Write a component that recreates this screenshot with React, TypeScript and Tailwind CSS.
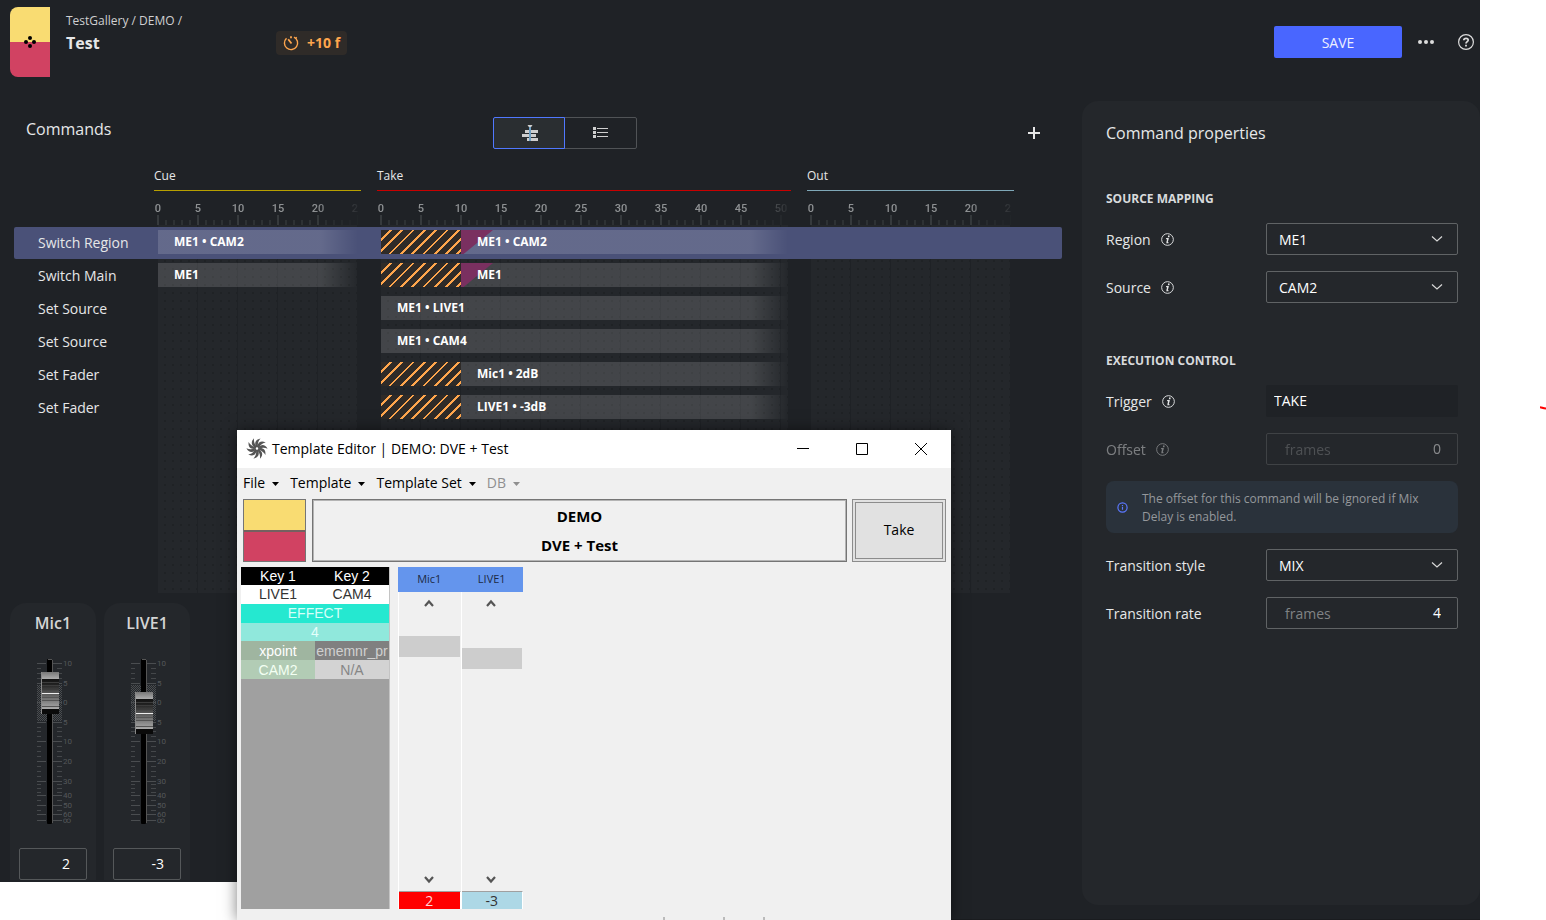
import React, { useState } from "react";

type Clip = { text: string; delay?: boolean; mix?: boolean };
type Command = { name: string; cue?: Clip; take?: Clip };

const COMMANDS: Command[] = [
    { name: "Switch Region", cue: { text: "ME1 • CAM2" }, take: { text: "ME1 • CAM2", delay: true, mix: true } },
    { name: "Switch Main", cue: { text: "ME1" }, take: { text: "ME1", delay: true, mix: true } },
    { name: "Set Source", take: { text: "ME1 • LIVE1" } },
    { name: "Set Source", take: { text: "ME1 • CAM4" } },
    { name: "Set Fader", take: { text: "Mic1 • 2dB", delay: true } },
    { name: "Set Fader", take: { text: "LIVE1 • -3dB", delay: true } },
];

const SECTIONS = [
    { name: "Cue", width: "w-[207px]", line: "border-[#b8a000]", frames: [0, 5, 10, 15, 20, 25] },
    { name: "Take", width: "w-[414px]", line: "border-[#c80000]", frames: [0, 5, 10, 15, 20, 25, 30, 35, 40, 45, 50] },
    { name: "Out", width: "w-[207px]", line: "border-[#7fa8b8]", frames: [0, 5, 10, 15, 20, 25] },
];

const FADERS = [
    { name: "Mic1", value: 2, cap: 14 },
    { name: "LIVE1", value: -3, cap: 34 },
];

// y position of each dB mark on the fader scale
const MARKS: [string, number][] = [
    ["10", 5], ["5", 25], ["0", 44], ["5", 64], ["10", 83], ["20", 103], ["30", 123], ["40", 137], ["50", 147], ["60", 156], ["∞", 162],
];
const MINOR = [10, 15, 20, 69, 73, 78, 88, 93, 98, 108, 113, 118, 126, 130, 134, 142, 152];

const MENUS = [
    { name: "File", disabled: false },
    { name: "Template", disabled: false },
    { name: "Template Set", disabled: false },
    { name: "DB", disabled: true },
];

function Ruler({ frames }: { frames: number[] }) {
    return (
        <div className="-ml-4 mr-[3px] overflow-hidden pt-[11px] [mask-image:linear-gradient(to_right,black_calc(100%-44px),rgba(0,0,0,0.1))]">
            <div className="flex font-['Roboto'] text-[11px] leading-[13px] font-medium text-[#8f9294]">
                {frames.map(f => (
                    <span key={f} className="w-10 shrink-0 text-center">{f}</span>
                ))}
            </div>
            <div className="ml-[19px] h-[10px] bg-[linear-gradient(to_right,#363a3d_2px,transparent_2px),linear-gradient(to_right,#2d3134_2px,transparent_2px)] bg-[size:40px_10px,8px_5px] bg-repeat-x bg-[position:0_0,0_5px]" />
        </div>
    );
}

function Bar({ clip }: { clip?: Clip }) {
    if (!clip) return null;
    return (
        <div className="flex h-6">
            {clip.delay && (
                <div className="w-20 bg-[#2f2b28] bg-[repeating-linear-gradient(135deg,transparent_0_6px,#ffa64d_6px_8px)]" />
            )}
            <div className="relative flex-1 bg-[linear-gradient(to_right,rgba(255,255,255,0.14)_calc(100%-37px),transparent)] pl-4">
                {clip.mix && <div className="absolute top-0 left-0 h-6 w-8 bg-[#7a3060] [clip-path:polygon(0_0,100%_0,8%_100%,0_100%)]" />}
                <span className="relative block text-xs leading-6 font-bold text-white">{clip.text}</span>
            </div>
        </div>
    );
}

function Timeline() {
    return (
        <div>
            <div className="mt-4 flex gap-4 pl-[154px]">
                {SECTIONS.map(s => (
                    <div key={s.name} className={`${s.width} shrink-0`}>
                        <h3 className={`${s.line} border-b pt-px pb-1 text-xs leading-5`}>{s.name}</h3>
                        <Ruler frames={s.frames} />
                    </div>
                ))}
            </div>
            {/* Lanes and command rows share one grid cell */}
            <div className="grid">
                <div className="col-start-1 row-start-1 flex h-[368px] gap-4 pl-[154px]">
                    {SECTIONS.map(s => (
                        <div key={s.name} className={`${s.width} shrink-0 pr-[3px] pl-1`}>
                            <div className="h-full bg-[#24272b] bg-[linear-gradient(to_left,#1f2226_1px,transparent_1px),radial-gradient(circle_at_7px_4px,#1f2225_1px,transparent_1.5px)] bg-[size:40px_8px,8px_8px]" />
                        </div>
                    ))}
                </div>
                <ul className="col-start-1 row-start-1 flex flex-col gap-px pt-[2px] pr-5 pl-[14px]">
                    {COMMANDS.map((c, i) => (
                        <li key={i} className={`flex h-8 rounded-xs ${i === 0 ? "bg-[#4a5178]" : ""}`}>
                            <span className="w-[140px] shrink-0 pl-6 text-sm leading-8">{c.name}</span>
                            <div className="flex gap-4 pt-[3px]">
                                <div className="w-[207px] shrink-0 pr-[3px] pl-1"><Bar clip={c.cue} /></div>
                                <div className="w-[414px] shrink-0 pr-[3px] pl-1"><Bar clip={c.take} /></div>
                            </div>
                        </li>
                    ))}
                </ul>
            </div>
        </div>
    );
}

function Fader({ name, value, cap }: { name: string; value: number; cap: number }) {
    const id = `fader-${name}`;
    return (
        <div className="flex w-[86px] flex-col items-center rounded-t-2xl bg-[#24272b] pt-2">
            <label htmlFor={id} className="text-base leading-6 font-semibold text-[#d4d4d4]">{name}</label>
            <div className="relative mt-[23px] h-[168px] w-[86px]">
                <svg viewBox="0 0 86 168" className="h-full w-full">
                    <defs>
                        <pattern id={`${id}-mesh`} width="2" height="2" patternUnits="userSpaceOnUse">
                            <rect width="1" height="1" fill="#4a4d50" />
                            <rect x="1" y="1" width="1" height="1" fill="#4a4d50" />
                        </pattern>
                        <linearGradient id={`${id}-cap`} x2="0" y2="1">
                            <stop offset="0" stopColor="#777" />
                            <stop offset=".16" stopColor="#aaa" />
                            <stop offset=".17" stopColor="#111" />
                            <stop offset=".3" stopColor="#222" />
                            <stop offset=".5" stopColor="#555" />
                            <stop offset=".88" stopColor="#aaa" />
                            <stop offset=".89" stopColor="#0a0a0a" />
                            <stop offset="1" stopColor="#0a0a0a" />
                        </linearGradient>
                    </defs>
                    <rect x="27" y="27" width="25" height="36" fill={`url(#${id}-mesh)`} />
                    {MARKS.map(([t, y], i) => (
                        <g key={i}>
                            <path d={`M27 ${y}.5h9M43 ${y}.5h9`} stroke="#4a4d50" />
                            <text x="53" y={y + 3} fontSize="8" fontFamily="Roboto" fill="#54575a">{t}</text>
                        </g>
                    ))}
                    {MINOR.map(y => (
                        <path key={y} d={`M27 ${y}.5h4M47 ${y}.5h5`} stroke="#44474a" />
                    ))}
                    <rect x="37" y="1" width="5" height="165" rx="1" fill="#000" />
                    <path d="M38 1.500h4M42.500 2v163" stroke="#555" />
                    <rect x="31" y={cap} width="18" height="42" fill={`url(#${id}-cap)`} />
                    <path d={`M31 ${cap + 10}.5h18M31 ${cap + 13}.5h18M31 ${cap + 17}.5h18`} stroke="#3c3c3c" />
                    <path d={`M31 ${cap + 25}.5h18M31 ${cap + 28}.5h18M31 ${cap + 34}.5h18`} stroke="#555" />
                    <path d={`M31 ${cap + 21}.5h18`} stroke="#eee" />
                    <path d={`M31.500 ${cap}v42`} stroke="#888" />
                </svg>
                <input id={id} type="range" min={-60} max={10} defaultValue={value} className="absolute inset-0 h-full w-full opacity-0 [writing-mode:vertical-lr]" />
            </div>
            <input aria-label={`${name} level`} defaultValue={value} className="mt-[22px] h-8 w-[68px] rounded-xs border border-[#55585a] bg-transparent pr-4 pb-[2px] text-right text-sm text-white outline-none" />
        </div>
    );
}

function InfoIcon() {
    return (
        <svg viewBox="0 0 14 14" className="h-[13px] w-[13px]" fill="none" stroke="currentColor">
            <circle cx="7" cy="7" r="6.300" />
            <path d="M5.500 6h1.800M7.800 5.400L6.300 10.600M5.700 10.400h2.300" strokeWidth="1.500" />
            <path d="M7.500 3.600h1.700" strokeWidth="1.900" />
        </svg>
    );
}

function Field({ label, id, info, dim, children }: { label: string; id: string; info?: boolean; dim?: boolean; children: React.ReactNode }) {
    return (
        <div className={`flex h-8 items-center justify-between ${dim ? "opacity-45" : ""}`}>
            <div className="flex items-center gap-[10px]">
                <label htmlFor={id} className="pt-[2px] text-sm">{label}</label>
                {info && <InfoIcon />}
            </div>
            <div className="w-48">{children}</div>
        </div>
    );
}

function Select({ id, value }: { id: string; value: string }) {
    return (
        <div className="relative">
            <select id={id} className="block h-8 w-full appearance-none rounded-xs border border-[#606365] bg-transparent px-3 pt-[2px] text-sm text-white outline-none">
                <option>{value}</option>
            </select>
            <svg viewBox="0 0 12 8" className="pointer-events-none absolute top-3 right-[15px] h-2 w-3" fill="none" stroke="#d8d8d8" strokeWidth="1.200">
                <path d="M1 1.500l5 4.500 5-4.500" />
            </svg>
        </div>
    );
}

function FramesInput({ id, value, disabled }: { id: string; value: string; disabled?: boolean }) {
    return (
        <div className="flex h-8 items-center rounded-xs border border-[#606365] pr-4 pl-[18px] text-sm">
            <span className="pt-[2px] text-[#808385]">frames</span>
            <input id={id} defaultValue={value} disabled={disabled} className="min-w-0 flex-1 bg-transparent text-right text-white outline-none" />
        </div>
    );
}

function Properties() {
    return (
        <aside className="mb-[14px] w-[398px] shrink-0 rounded-2xl bg-[#24272b] pt-5 pr-[22px] pl-6">
            <h2 className="text-base leading-6">Command properties</h2>
            <h3 className="mt-11 text-xs leading-5 font-bold text-[#d8dadc]">SOURCE MAPPING</h3>
            <div className="mt-[14px] flex flex-col gap-4">
                <Field label="Region" id="region" info><Select id="region" value="ME1" /></Field>
                <Field label="Source" id="source" info><Select id="source" value="CAM2" /></Field>
            </div>
            <h3 className="mt-12 text-xs leading-5 font-bold text-[#d8dadc]">EXECUTION CONTROL</h3>
            <div className="mt-[14px] flex flex-col gap-4">
                <Field label="Trigger" id="trigger" info>
                    <input id="trigger" readOnly value="TAKE" className="block h-8 w-full rounded-xs bg-[#1f2226] px-2 pb-[2px] text-sm text-white outline-none" />
                </Field>
                <Field label="Offset" id="offset" info dim><FramesInput id="offset" value="0" disabled /></Field>
                <div className="flex h-[52px] items-center gap-[14px] rounded-lg bg-[#2a323b] pl-[11px]">
                    <svg viewBox="0 0 12 12" className="h-[11px] w-[11px] shrink-0" fill="none" stroke="#5b78ff" strokeWidth="1.300">
                        <circle cx="6" cy="6" r="5" />
                        <path d="M6 5.300v3.200M6 3.200v1.200" />
                    </svg>
                    <p className="w-[290px] pt-[2px] text-xs leading-[18px] text-[#95989b]">The offset for this command will be ignored if Mix Delay is enabled.</p>
                </div>
                <Field label="Transition style" id="style"><Select id="style" value="MIX" /></Field>
                <Field label="Transition rate" id="rate"><FramesInput id="rate" value="4" /></Field>
            </div>
        </aside>
    );
}

function LevelColumn({ gap, value, tone }: { gap: string; value: string; tone: string }) {
    return (
        <div className="flex flex-1 flex-col border-l border-white">
            <button aria-label="Up" className="flex h-6 items-center justify-center pr-[2px] pb-[2px]">
                <svg viewBox="0 0 10 8" className="h-2 w-[10px]" fill="none" stroke="#555" strokeWidth="2.200"><path d="M1 7l4-4.500L9 7" /></svg>
            </button>
            <div className={`${gap} mr-px h-[21px] bg-[#cdcdcd]`} />
            <button aria-label="Down" className="mt-auto flex h-[22px] items-center justify-center pr-[2px]">
                <svg viewBox="0 0 10 8" className="h-2 w-[10px]" fill="none" stroke="#555" strokeWidth="2.200"><path d="M1 1l4 4.500L9 1" /></svg>
            </button>
            <div className={`${tone} h-[18px] border-t border-r border-t-[#a0a0a0] border-r-white text-center text-sm leading-[17px]`}>{value}</div>
        </div>
    );
}

function TemplateEditor() {
    return (
        <div role="dialog" aria-label="Template Editor" className="absolute top-[430px] bottom-0 left-[237px] flex w-[714px] flex-col bg-[#f0f0f0] text-black shadow-[0_0_14px_rgba(0,0,0,0.5)]">
            <div className="flex h-[38px] items-center bg-white pl-[9px]">
                <svg viewBox="-10 -10 20 20" className="h-[22px] w-[22px] pb-px" fill="#555">
                    {[0, 36, 72, 108, 144, 180, 216, 252, 288, 324].map(a => (
                        <path key={a} transform={`rotate(${a})`} d="M-1.200 -2.200C-2.600 -6 -1 -8.700 3.400 -9.500C1.600 -7.500 .6 -5.500 .8 -2.200Z" />
                    ))}
                    <circle r="2" fill="none" stroke="#555" strokeWidth="1.600" />
                </svg>
                <span className="ml-1 pb-px text-sm">Template Editor | DEMO: DVE + Test</span>
                <div className="ml-auto flex pr-px">
                    <button aria-label="Minimize" className="flex h-[38px] w-[59px] items-center justify-center">
                        <svg viewBox="0 0 12 12" className="h-3 w-3" stroke="#000" fill="none"><path d="M0 5.500h12" /></svg>
                    </button>
                    <button aria-label="Maximize" className="flex h-[38px] w-[59px] items-center justify-center">
                        <svg viewBox="0 0 12 12" className="h-3 w-3" stroke="#000" fill="none"><path d="M.5.5h11v11H.5z" /></svg>
                    </button>
                    <button aria-label="Close" className="flex h-[38px] w-[59px] items-center justify-center">
                        <svg viewBox="0 0 12 12" className="h-3 w-3" stroke="#000" fill="none"><path d="M0 0l12 12M12 0L0 12" /></svg>
                    </button>
                </div>
            </div>
            <div className="flex h-[31px] items-center gap-[11px] pb-[2px] pl-[6px] text-sm">
                {MENUS.map(m => (
                    <button key={m.name} disabled={m.disabled} className="flex items-center gap-[7px] disabled:text-[#8f8f8f]">
                        {m.name}
                        <svg viewBox="0 0 7 4" className="mt-[3px] h-1 w-[7px]" fill="currentColor"><path d="M0 0h7L3.500 4z" /></svg>
                    </button>
                ))}
            </div>
            <div className="flex h-[63px] gap-[5px] pr-[5px] pl-[6px]">
                <div className="w-[63px] shrink-0 border border-[#757575] bg-[linear-gradient(#f9dc72_30px,#756060_30px_32px,#d14262_32px)]" />
                <div className="ml-px flex flex-1 flex-col items-center justify-center gap-1 border border-[#757575] text-[15px] leading-[25px] font-bold inset-ring inset-ring-[#b4b4b4]">
                    <span>DEMO</span>
                    <span>DVE + Test</span>
                </div>
                <button className="w-[94px] border-4 border-double border-[#8c8c8c] bg-[#e1e1e1] pb-px text-sm">Take</button>
            </div>
            <div className="mt-[5px] flex min-h-0 flex-1 gap-2 pl-1">
                <div className="w-[149px] overflow-hidden border-r border-[#c4c4c4] bg-[#a0a0a0] font-['Liberation_Sans'] text-sm">
                    <table className="h-28 w-full table-fixed border-collapse text-center leading-[18px]">
                        <thead>
                            <tr className="bg-black text-white">
                                <th className="font-normal">Key 1</th>
                                <th className="font-normal">Key 2</th>
                            </tr>
                        </thead>
                        <tbody>
                            <tr className="bg-white text-[#333]"><td>LIVE1</td><td>CAM4</td></tr>
                            <tr className="bg-[#25e8d0] text-[#d6fff9]"><td colSpan={2}>EFFECT</td></tr>
                            <tr className="bg-[#90e8dc] text-[#e4fffb]"><td colSpan={2}>4</td></tr>
                            <tr>
                                <td className="bg-[#9fb5a0] text-white">xpoint</td>
                                <td className="overflow-hidden bg-[#808080] whitespace-nowrap text-[#d0d0d0]">ememnr_pr</td>
                            </tr>
                            <tr>
                                <td className="bg-[#b2ccb5] text-[#f2fff2]">CAM2</td>
                                <td className="bg-[#d3d3d3] text-[#868686]">N/A</td>
                            </tr>
                        </tbody>
                    </table>
                </div>
                <div className="flex w-[125px] flex-col">
                    <div className="flex h-[25px] shrink-0 items-center bg-[#6495ed] text-center text-[11px] text-[#1c2a44]">
                        <span className="flex-1">Mic1</span>
                        <span className="flex-1">LIVE1</span>
                    </div>
                    <div className="flex flex-1">
                        <LevelColumn gap="mt-5" value="2" tone="bg-[#ff0000] text-[#ffd8d8]" />
                        <LevelColumn gap="mt-8" value="-3" tone="bg-[#add8e6] text-[#333]" />
                    </div>
                </div>
            </div>
            <div className="flex h-[11px] shrink-0 items-end pl-[426px]">
                <div className="h-[3px] w-[60px] border-l-2 border-[#bbb]" />
                <div className="h-[3px] w-10 border-l-2 border-[#bbb]" />
                <div className="h-[3px] border-l-2 border-[#bbb]" />
            </div>
        </div>
    );
}

export default function App() {
    const [view, setView] = useState<"timeline" | "list">("timeline");

    return (
        <div className="relative min-h-screen overflow-hidden bg-white pr-[66px] font-['Open_Sans',sans-serif] text-[#e6e7e8]">
            <div className="flex min-h-screen flex-col border-b border-[#1a1c1f] bg-[#1f2226]">
                <header className="flex items-center pt-[7px] pr-[6px] pb-6 pl-[10px]">
                    <div className="flex h-[70px] w-10 items-center justify-center rounded-l-lg bg-[linear-gradient(#f9dc72_50%,#d14262_50%)]">
                        <svg viewBox="0 0 12 12" className="h-3 w-3" fill="#000">
                            <circle cx="6" cy="2" r="2" />
                            <circle cx="6" cy="10" r="2" />
                            <circle cx="2" cy="6" r="2" />
                            <circle cx="10" cy="6" r="2" />
                        </svg>
                    </div>
                    <div className="ml-4 w-[210px] self-start pt-[5px]">
                        <nav className="text-xs leading-[18px] text-[#cfd0d1]">
                            <a href="#gallery">TestGallery</a> / <a href="#demo">DEMO</a> /
                        </nav>
                        <h1 className="mt-px text-base leading-6 font-bold">Test</h1>
                    </div>
                    <div className="mt-[2px] flex h-6 items-center gap-2 rounded-sm bg-[#2f2b28] px-[7px] text-sm font-bold text-[#ffa64d]">
                        <svg viewBox="0 0 16 16" className="h-4 w-4" fill="none" stroke="currentColor" strokeWidth="1.400">
                            <path d="M3.500 3.200A6.600 6.600 0 1 0 11 2.100" />
                            <path d="M8 1.300v2M5.200 4.200L8.500 8.500" strokeWidth="1.800" />
                            <path d="M12.500 3.500l1.200-1.200" />
                        </svg>
                        +10 f
                    </div>
                    <button className="ml-auto h-8 w-32 rounded-xs bg-[#4966ff] pt-[2px] text-sm text-[#eef0ff]">SAVE</button>
                    <button aria-label="More" className="ml-4">
                        <svg viewBox="0 0 16 16" className="h-4 w-4" fill="#dcdcdc">
                            <circle cx="2" cy="8" r="2" />
                            <circle cx="8" cy="8" r="2" />
                            <circle cx="14" cy="8" r="2" />
                        </svg>
                    </button>
                    <button aria-label="Help" className="ml-6">
                        <svg viewBox="0 0 16 16" className="h-4 w-4" fill="none" stroke="#dcdcdc">
                            <circle cx="8" cy="8" r="7.400" strokeWidth="1.200" />
                            <path d="M5.800 6.200C5.900 3.600 10.200 3.700 10.200 6.100C10.200 7.700 8 7.700 8 9.600" strokeWidth="1.700" />
                            <path d="M8 10.800v1.700" strokeWidth="1.800" />
                        </svg>
                    </button>
                </header>

                <div className="flex flex-1">
                    <main className="min-w-0 flex-1">
                        <div className="flex items-start justify-between pt-4 pr-8 pl-[26px]">
                            <h2 className="text-base leading-6">Commands</h2>
                            <div className="flex">
                                <button aria-label="Timeline view" onClick={() => setView("timeline")}
                                    className={`relative flex h-8 w-[72px] items-center justify-center rounded-l-xs border pl-[2px] ${view === "timeline" ? "z-10 border-[#5078ff] bg-[#2a2e31]" : "border-[#505356]"}`}>
                                    <svg viewBox="0 0 18 18" className="h-[18px] w-[18px]" fill="#cfcfcf">
                                        <path d="M6.500 1h5L9.500 4h-1z" />
                                        <path d="M4 6h13v3H4zM1 10h14v3H1zM6 14h11v3H6z" />
                                        <path d="M8 3h2v14H8z" fill="#6fa0c4" />
                                    </svg>
                                </button>
                                <button aria-label="List view" onClick={() => setView("list")}
                                    className={`-ml-px flex h-8 w-[73px] items-center justify-center rounded-r-xs border pl-[2px] ${view === "list" ? "border-[#5078ff] bg-[#2a2e31]" : "border-[#505356]"}`}>
                                    <svg viewBox="0 0 16 12" className="h-3 w-4" fill="#cfcfcf">
                                        <path d="M0 0h3v3H0zM0 4h3v3H0zM0 8h3v3H0zM4 1h11v1H4zM4 5h11v1H4zM4 9h11v1H4z" />
                                    </svg>
                                </button>
                            </div>
                            <button aria-label="Add command" className="flex h-8 w-8 items-center justify-center">
                                <svg viewBox="0 0 12 12" className="h-3 w-3" stroke="#e6e6e6" strokeWidth="2"><path d="M6 0v12M0 6h12" /></svg>
                            </button>
                        </div>
                        <Timeline />
                        <div className="flex gap-2 pt-[10px] pl-[10px]">
                            {FADERS.map(f => <Fader key={f.name} {...f} />)}
                        </div>
                    </main>
                    <Properties />
                </div>
            </div>

            {/* Blank desktop strip under the faders */}
            <div className="absolute bottom-0 left-0 h-[38px] w-[237px] bg-white" />
            <TemplateEditor />
            <svg viewBox="0 0 6 5" className="absolute top-[406px] right-0 h-[5px] w-[6px]" fill="none" stroke="#ff0000" strokeWidth="2">
                <path d="M0 1.200c2 .2 3 1.300 6 1.400" />
            </svg>
        </div>
    );
}
